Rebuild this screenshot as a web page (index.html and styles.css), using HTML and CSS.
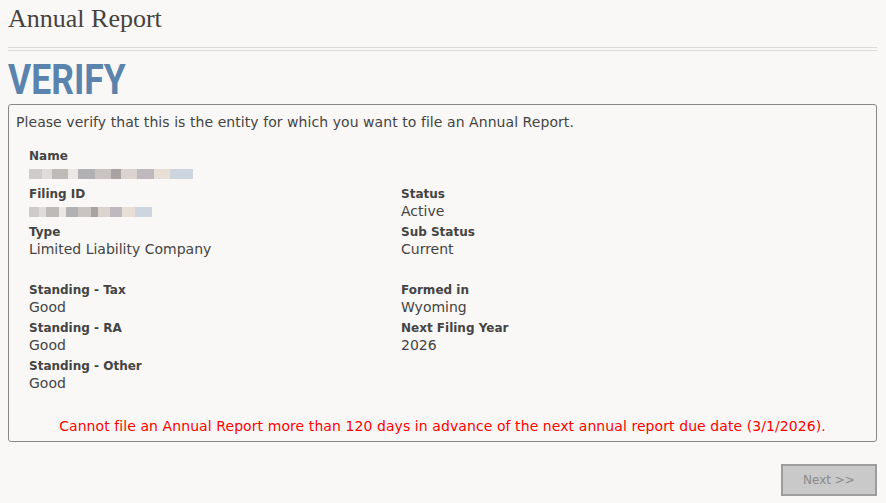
FILE: index.html
```html
<!DOCTYPE html>
<html>
<head>
<meta charset="utf-8">
<link rel="stylesheet" href="styles.css">
</head>
<body>
<div class="page">
  <h1 class="title">Annual Report</h1>
  <div class="rule"></div>
  <h2 class="verify"><span class="verify-text">VERIFY</span></h2>
  <div class="panel">
    <p class="intro">Please verify that this is the entity for which you want to file an Annual Report.</p>
    <div class="fields">
      <div class="field full">
        <div class="label">Name</div>
        <div class="value"><span class="blur b1"></span></div>
      </div>
      <div class="field">
        <div class="label">Filing ID</div>
        <div class="value"><span class="blur b2"></span></div>
      </div>
      <div class="field">
        <div class="label">Status</div>
        <div class="value">Active</div>
      </div>
      <div class="field">
        <div class="label">Type</div>
        <div class="value">Limited Liability Company</div>
      </div>
      <div class="field">
        <div class="label">Sub Status</div>
        <div class="value">Current</div>
      </div>
      <div class="field gap">
        <div class="label">Standing - Tax</div>
        <div class="value">Good</div>
      </div>
      <div class="field gap">
        <div class="label">Formed in</div>
        <div class="value">Wyoming</div>
      </div>
      <div class="field">
        <div class="label">Standing - RA</div>
        <div class="value">Good</div>
      </div>
      <div class="field">
        <div class="label">Next Filing Year</div>
        <div class="value">2026</div>
      </div>
      <div class="field">
        <div class="label">Standing - Other</div>
        <div class="value">Good</div>
      </div>
    </div>
    <p class="warning">Cannot file an Annual Report more than 120 days in advance of the next annual report due date (3/1/2026).</p>
  </div>
  <div class="actions">
    <button class="next" disabled>Next &gt;&gt;</button>
  </div>
</div>
</body>
</html>
```
FILE: styles.css
```css
html, body {
  margin: 0;
  padding: 0;
  background: #f9f8f6;
}
.page {
  padding: 0 9px 0 8px;
  font-family: "DejaVu Sans", Verdana, sans-serif;
  color: #444;
}
.title {
  margin: 0;
  padding-top: 6px;
  height: 40px;
  font-family: "Liberation Serif", "Times New Roman", serif;
  font-weight: normal;
  font-size: 26px;
  line-height: 26px;
  color: #464240;
  box-sizing: border-box;
}
.rule {
  margin-top: 7px;
  height: 2px;
  border-top: 1px solid #dcdad6;
  border-bottom: 1px solid #dcdad6;
}
.verify {
  margin: 0;
  padding-top: 8px;
  height: 53px;
  box-sizing: border-box;
  font-family: Roboto, "Liberation Sans", sans-serif;
  font-weight: bold;
  font-size: 42px;
  line-height: 42px;
  color: #5a84ad;
}
.verify-text {
  display: inline-block;
  transform: scaleX(0.845);
  transform-origin: left center;
}
.panel {
  border: 1px solid #888;
  border-radius: 3px;
  padding: 9px 7px 6px 7px;
}
.intro {
  margin: 0;
  font-size: 14px;
  line-height: 17px;
  letter-spacing: 0.06px;
}
.fields {
  display: grid;
  grid-template-columns: 372px 1fr;
  padding: 17px 0 0 13px;
}
.field {
  height: 38px;
}
.field.full {
  grid-column: 1 / span 2;
}
.field.gap {
  margin-top: 20px;
}
.label {
  font-weight: bold;
  font-size: 12px;
  line-height: 17px;
}
.value {
  font-size: 14px;
  line-height: 17px;
  height: 17px;
}
.blur {
  display: inline-block;
  height: 10px;
  margin-top: 4px;
  background: linear-gradient(90deg, #c9c6c4 0 8%, #dcd8d6 8% 14%, #b7b3b0 14% 24%, #e9e5e2 24% 30%, #a9a8ab 30% 40%, #c4bdbb 40% 50%, #9f9a97 50% 56%, #d8cfc9 56% 66%, #b8b2b8 66% 76%, #e6ddd3 76% 86%, #c8d2dc 86% 100%);
  opacity: 0.9;
}
.b1 { width: 164px; }
.b2 { width: 123px; }
.warning {
  margin: 22px 0 0 0;
  text-align: center;
  color: #ff0000;
  font-size: 14px;
  line-height: 17px;
  letter-spacing: 0.08px;
}
.actions {
  display: flex;
  justify-content: flex-end;
  margin-top: 22px;
}
.next {
  width: 96px;
  height: 32px;
  background: #c9c9c9;
  border: 2px solid #9d9d9d;
  color: #8a8a8a;
  font-family: "DejaVu Sans", Verdana, sans-serif;
  font-size: 12px;
  padding: 0;
}
```
